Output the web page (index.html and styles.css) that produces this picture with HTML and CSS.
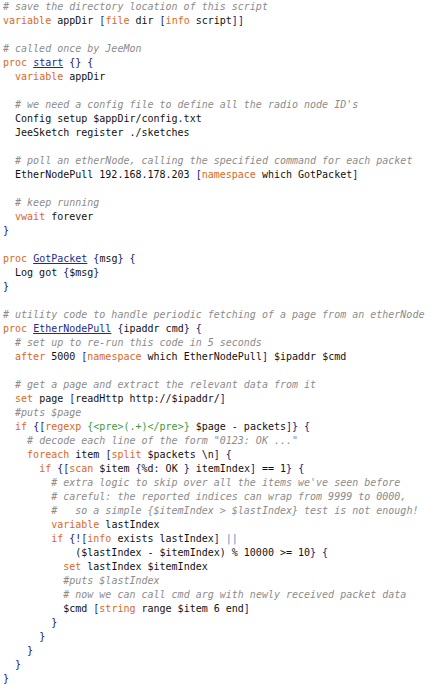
FILE: index.html
```html
<!DOCTYPE html>
<html>
<head>
<meta charset="utf-8">
<link rel="stylesheet" href="styles.css">
</head>
<body>
<pre class="code"><span class="c"># save the directory location of this script</span>
<span class="k">variable</span> appDir <span class="b">[</span><span class="k">file</span> dir <span class="b">[</span><span class="k">info</span> script<span class="b">]]</span>

<span class="c"># called once by JeeMon</span>
<span class="k">proc</span> <span class="p">start</span> <span class="b">{}</span> <span class="b">{</span>
  <span class="k">variable</span> appDir

  <span class="c"># we need a config file to define all the radio node ID's</span>
  Config setup $appDir/config.txt
  JeeSketch register ./sketches

  <span class="c"># poll an etherNode, calling the specified command for each packet</span>
  EtherNodePull 192.168.178.203 <span class="b">[</span><span class="k">namespace</span> which GotPacket<span class="b">]</span>

  <span class="c"># keep running</span>
  <span class="k">vwait</span> forever
<span class="b">}</span>

<span class="k">proc</span> <span class="p">GotPacket</span> <span class="b">{</span>msg<span class="b">}</span> <span class="b">{</span>
  Log got <span class="b">{</span>$msg<span class="b">}</span>
<span class="b">}</span>

<span class="c"># utility code to handle periodic fetching of a page from an etherNode</span>
<span class="k">proc</span> <span class="p">EtherNodePull</span> <span class="b">{</span>ipaddr cmd<span class="b">}</span> <span class="b">{</span>
  <span class="c"># set up to re-run this code in 5 seconds</span>
  <span class="k">after</span> 5000 <span class="b">[</span><span class="k">namespace</span> which EtherNodePull<span class="b">]</span> $ipaddr $cmd

  <span class="c"># get a page and extract the relevant data from it</span>
  <span class="k">set</span> page <span class="b">[</span>readHttp http://$ipaddr/<span class="b">]</span>
  <span class="c">#puts $page</span>
  <span class="k">if</span> <span class="b">{[</span><span class="k">regexp</span> <span class="s">{&lt;pre&gt;(.+)&lt;/pre&gt;}</span> $page - packets<span class="b">]}</span> <span class="b">{</span>
    <span class="c"># decode each line of the form "0123: OK ..."</span>
    <span class="k">foreach</span> item <span class="b">[</span><span class="k">split</span> $packets \n<span class="b">]</span> <span class="b">{</span>
      <span class="k">if</span> <span class="b">{[</span><span class="k">scan</span> $item <span class="b">{</span>%d: OK <span class="b">}</span> itemIndex<span class="b">]</span> == 1<span class="b">}</span> <span class="b">{</span>
        <span class="c"># extra logic to skip over all the items we've seen before</span>
        <span class="c"># careful: the reported indices can wrap from 9999 to 0000,</span>
        <span class="c">#   so a simple {$itemIndex &gt; $lastIndex} test is not enough!</span>
        <span class="k">variable</span> lastIndex
        <span class="k">if</span> <span class="b">{![</span><span class="k">info</span> exists lastIndex<span class="b">]</span> <span class="o">||</span>
            ($lastIndex - $itemIndex) % 10000 &gt;= 10<span class="b">}</span> <span class="b">{</span>
          <span class="k">set</span> lastIndex $itemIndex
          <span class="c">#puts $lastIndex</span>
          <span class="c"># now we can call cmd arg with newly received packet data</span>
          $cmd <span class="b">[</span><span class="k">string</span> range $item 6 end<span class="b">]</span>
        <span class="b">}</span>
      <span class="b">}</span>
    <span class="b">}</span>
  <span class="b">}</span>
<span class="b">}</span></pre>
</body>
</html>
```
FILE: styles.css
```css
html, body {
  margin: 0;
  padding: 0;
  background: #ffffff;
}
.code {
  margin: 0;
  padding: 0 0 0 3px;
  font-family: "DejaVu Sans Mono", "Liberation Mono", monospace;
  font-size: 10px;
  line-height: 14px;
  color: #111111;
  white-space: pre;
}
.c {
  color: #8c8c8c;
  font-style: italic;
}
.k {
  color: #d9691f;
}
.p {
  color: #1e2c8c;
  text-decoration: underline;
}
.b {
  color: #16206e;
}
.s {
  color: #3f9a3f;
}
.o {
  color: #4a8fd6;
}
```
